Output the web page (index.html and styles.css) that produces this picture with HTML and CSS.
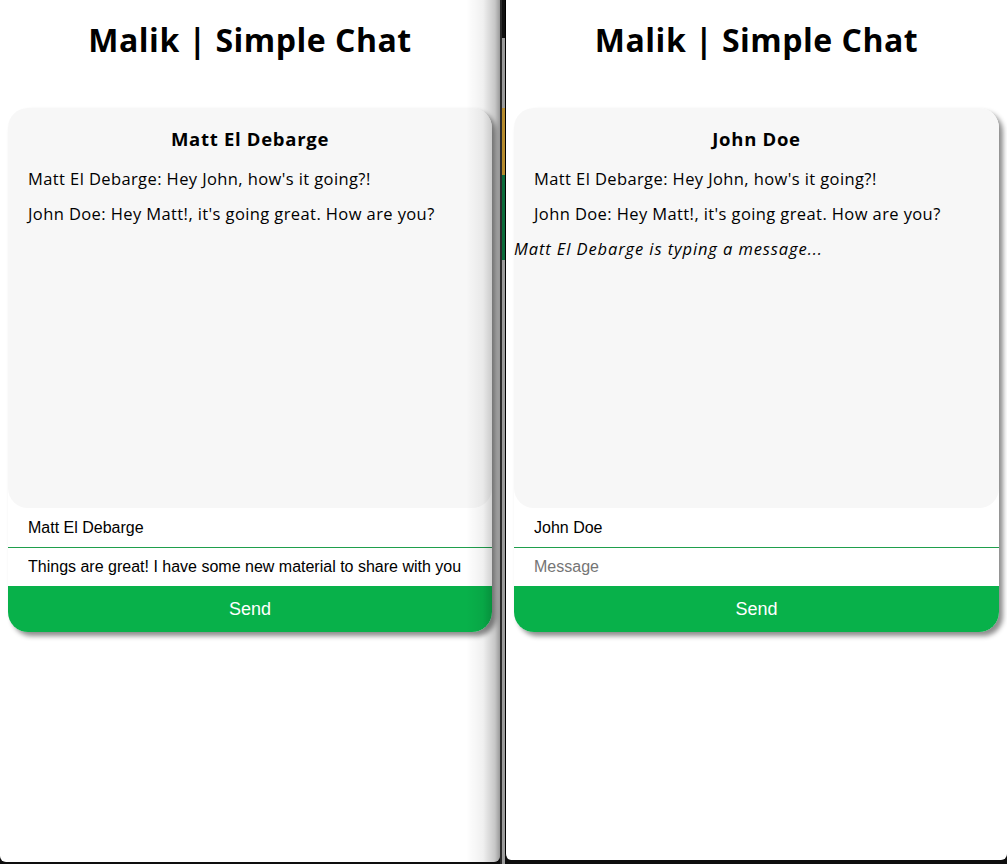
FILE: index.html
```html
<!DOCTYPE html>
<html lang="en">
<head>
<meta charset="utf-8">
<title>Malik | Simple Chat</title>
<link rel="stylesheet" href="styles.css">
</head>
<body>
<div class="desktop">
  <div class="window window-left">
    <h1 class="app-title">Malik | Simple Chat</h1>
    <div class="card">
      <div class="chat">
        <h2 class="chat-title">Matt El Debarge</h2>
        <p class="msg">Matt El Debarge: Hey John, how's it going?!</p>
        <p class="msg">John Doe: Hey Matt!, it's going great. How are you?</p>
      </div>
      <input class="field field-name" type="text" value="Matt El Debarge">
      <input class="field field-message" type="text" placeholder="Message" value="Things are great! I have some new material to share with you">
      <button class="send" type="button">Send</button>
    </div>
    <div class="cast-shadow"></div>
  </div>
  <div class="gap-strip">
    <div class="strip-black"></div>
    <div class="strip-gray"></div>
    <div class="strip-yellow"></div>
    <div class="strip-green"></div>
    <div class="strip-rest"></div>
  </div>
  <div class="window window-right">
    <h1 class="app-title">Malik | Simple Chat</h1>
    <div class="card">
      <div class="chat">
        <h2 class="chat-title">John Doe</h2>
        <p class="msg">Matt El Debarge: Hey John, how's it going?!</p>
        <p class="msg">John Doe: Hey Matt!, it's going great. How are you?</p>
        <p class="typing">Matt El Debarge is typing a message...</p>
      </div>
      <input class="field field-name" type="text" value="John Doe">
      <input class="field field-message" type="text" placeholder="Message">
      <button class="send" type="button">Send</button>
    </div>
  </div>
</div>
</body>
</html>
```

FILE: styles.css
```css
* { box-sizing: border-box; }

html, body {
  margin: 0;
  padding: 0;
  background: #0e0e0e;
}

.desktop {
  display: flex;
  width: 1007px;
  height: 864px;
  align-items: flex-start;
}

.window {
  position: relative;
  background: #ffffff;
  display: flex;
  flex-direction: column;
  overflow: hidden;
}

.window-left {
  width: 500px;
  height: 862px;
  border-radius: 0 0 6px 6px;
}

.window-right {
  width: 502px;
  height: 860px;
  border-left: 1px solid #000;
  border-radius: 0 0 6px 6px;
}

.cast-shadow {
  position: absolute;
  top: 0;
  right: 0;
  width: 34px;
  height: 100%;
  background: linear-gradient(to right, rgba(0,0,0,0) 0%, rgba(0,0,0,0.06) 50%, rgba(0,0,0,0.22) 85%, rgba(0,0,0,0.4) 100%);
  pointer-events: none;
}

.gap-strip {
  width: 5px;
  height: 864px;
  display: flex;
  flex-direction: column;
  border-left: 2px solid #2a2a2a;
}

.strip-black { height: 38px; background: #111; }
.strip-gray { height: 70px; background: #9a9a9a; }
.strip-yellow { height: 67px; background: #b58a2c; }
.strip-green { height: 85px; background: #0b6b3a; }
.strip-rest { flex: 1; background: #9b9b9b; }

.app-title {
  margin: 0;
  padding: 20px 0 0;
  height: 108px;
  text-align: center;
  font-family: "Open Sans", "DejaVu Sans", sans-serif;
  font-weight: 700;
  font-size: 32px;
  line-height: 39px;
  letter-spacing: 0.5px;
  color: #000;
}

.card {
  margin: 0 8px;
  background: #fff;
  border-radius: 20px;
  box-shadow: 4px 4px 5px rgba(0, 0, 0, 0.45);
  display: flex;
  flex-direction: column;
}

.chat {
  height: 400px;
  background: #f7f7f7;
  border-radius: 20px;
  padding-top: 20px;
  font-family: "Open Sans", "DejaVu Sans", sans-serif;
  color: #000;
}

.chat-title {
  margin: 0 0 19px;
  text-align: center;
  font-size: 18.5px;
  font-weight: 700;
  line-height: 22px;
  letter-spacing: 0.7px;
}

.msg {
  margin: 0 0 15px;
  padding-left: 20px;
  font-size: 16.5px;
  line-height: 20px;
  letter-spacing: 0.4px;
}

.typing {
  margin: 0;
  font-size: 16.5px;
  line-height: 20px;
  letter-spacing: 0.9px;
  font-style: italic;
}

.field {
  display: block;
  width: 100%;
  border: none;
  outline: none;
  background: #fff;
  padding: 0 20px;
  font-family: "Liberation Sans", Arial, sans-serif;
  font-size: 16px;
  color: #000;
}

.field::placeholder { color: #757575; }

.field-name {
  height: 40px;
  border-bottom: 1px solid #1f9f4c;
}

.field-message {
  height: 38px;
}

.send {
  height: 46px;
  border: none;
  background: #08b14a;
  color: #fff;
  font-family: "Liberation Sans", Arial, sans-serif;
  font-size: 18px;
  border-radius: 0 0 20px 20px;
  padding: 0;
}
```
